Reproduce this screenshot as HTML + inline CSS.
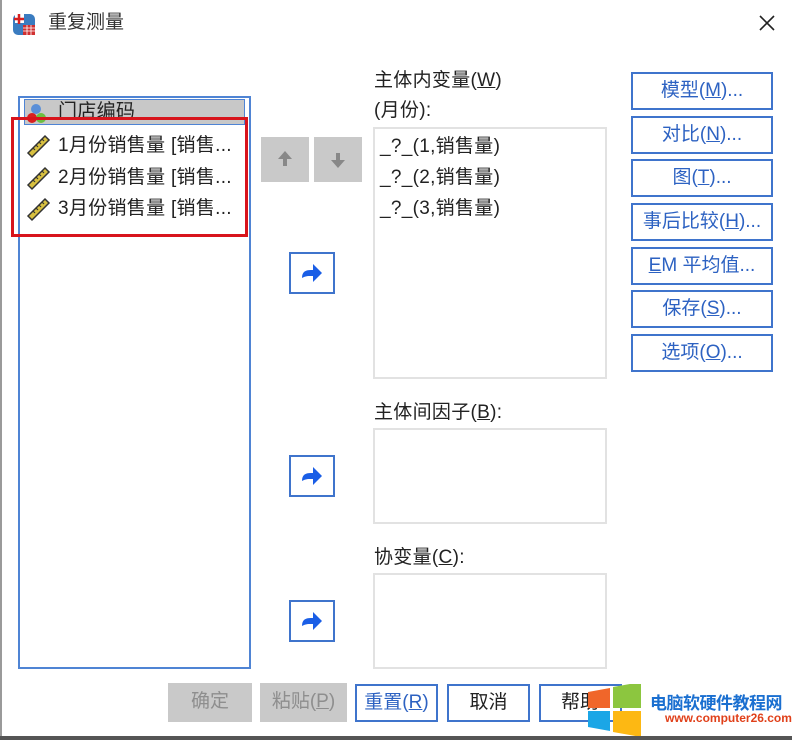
<!DOCTYPE html>
<html><head><meta charset="utf-8"><style>
*{margin:0;padding:0;box-sizing:border-box}
body{width:792px;height:740px;background:#fff;position:relative;overflow:hidden;font-family:"Liberation Sans","Noto Sans CJK SC",sans-serif;color:#222}
.a{position:absolute}
.t{font-size:19px;white-space:nowrap;line-height:22px;letter-spacing:0.3px}
.box{border:2px solid #e2e2e2;background:#fff}
.rb{border:2px solid #3f74cc;background:#fff;color:#2d62c2;font-size:19px;text-align:center;line-height:33px;white-space:nowrap}
.gb{background:#c9c9c9;color:#8e8e8e;font-size:19px;text-align:center;line-height:38px}
.ab{border:2px solid #3f74cc;background:#fff;width:46px;height:42px}
u{text-decoration:underline}
</style></head><body>
<div class="a" style="left:0;top:0;width:2px;height:740px;background:#9a9a9a"></div>
<div class="a" style="left:0;top:736px;width:792px;height:4px;background:#555"></div>
<svg class="a" style="left:12px;top:11px" width="26" height="26" viewBox="0 0 26 26"><rect x="1" y="3" width="22" height="21" rx="5" fill="#3a7cc0"/><rect x="3" y="3" width="9" height="9" fill="#fff"/><path d="M2 8h10M7 3v10" stroke="#d62020" stroke-width="2.5"/><rect x="11" y="14" width="12" height="10" fill="#d03030"/><path d="M11 17h12M11 20h12M15 14v10M19 14v10" stroke="#fff" stroke-width="0.8"/></svg>
<div class="a t" style="left:48px;top:12px;font-size:19px;color:#333;letter-spacing:0">重复测量</div>
<svg class="a" style="left:758px;top:14px" width="18" height="18"><path d="M2 2L16 16M16 2L2 16" stroke="#222" stroke-width="1.6"/></svg>
<div class="a" style="left:18px;top:96px;width:233px;height:573px;border:2px solid #4f84d4"></div>
<div class="a" style="left:24px;top:99px;width:221px;height:26px;background:#c8c8c8;border:1px solid #4f84d4"></div>
<svg class="a" style="left:26px;top:101px" width="24" height="24"><circle cx="10" cy="8" r="5" fill="#5a8fd8"/><circle cx="6" cy="17" r="5" fill="#d82020"/><circle cx="15" cy="17" r="5" fill="#6cbf40"/></svg>
<div class="a t" style="left:58px;top:101px">门店编码</div>
<svg width="0" height="0"><defs><g id="r"><path d="M3 20L20 3l4 4L7 24z" fill="#d8c040" stroke="#333" stroke-width="1.5"/><path d="M8 15l2 2M11 12l2 2M14 9l2 2M17 6l2 2" stroke="#333" stroke-width="1.2"/></g></defs></svg>
<svg class="a" style="left:25px;top:133px" width="26" height="26"><use href="#r"/></svg>
<svg class="a" style="left:25px;top:165px" width="26" height="26"><use href="#r"/></svg>
<svg class="a" style="left:25px;top:196px" width="26" height="26"><use href="#r"/></svg>
<div class="a t" style="left:58px;top:135px">1月份销售量 [销售...</div>
<div class="a t" style="left:58px;top:167px">2月份销售量 [销售...</div>
<div class="a t" style="left:58px;top:198px">3月份销售量 [销售...</div>
<div class="a" style="left:11px;top:117px;width:237px;height:120px;border:3px solid #d8141c"></div>
<div class="a gb" style="left:261px;top:137px;width:48px;height:45px"></div>
<div class="a gb" style="left:314px;top:137px;width:48px;height:45px"></div>
<svg class="a" style="left:261px;top:137px" width="100" height="45"><path d="M24 14l-7 8h5v7h4v-7h5z" fill="#888"/><path d="M77 31l-7-8h5v-7h4v7h5z" fill="#888"/></svg>
<svg width="0" height="0"><defs><g id="ar"><path d="M8 18c0-6 3-8 9-8h2V4l9 9-9 9v-6h-3c-4 0-6 1-8 2z" fill="#1a5ee6"/></g></defs></svg>
<div class="a ab" style="left:289px;top:252px"><svg width="42" height="38"><use href="#ar" transform="translate(3,6)"/></svg></div>
<div class="a ab" style="left:289px;top:455px"><svg width="42" height="38"><use href="#ar" transform="translate(3,6)"/></svg></div>
<div class="a ab" style="left:289px;top:600px"><svg width="42" height="38"><use href="#ar" transform="translate(3,6)"/></svg></div>
<div class="a t" style="left:374px;top:70px">主体内变量(<u>W</u>)</div>
<div class="a t" style="left:374px;top:100px">(月份):</div>
<div class="a box" style="left:373px;top:127px;width:234px;height:252px"></div>
<div class="a t" style="left:380px;top:136px">_?_(1,销售量)</div>
<div class="a t" style="left:380px;top:167px">_?_(2,销售量)</div>
<div class="a t" style="left:380px;top:198px">_?_(3,销售量)</div>
<div class="a t" style="left:374px;top:402px">主体间因子(<u>B</u>):</div>
<div class="a box" style="left:373px;top:428px;width:234px;height:96px"></div>
<div class="a t" style="left:374px;top:547px">协变量(<u>C</u>):</div>
<div class="a box" style="left:373px;top:573px;width:234px;height:96px"></div>
<div class="a rb" style="left:631px;top:72px;width:142px;height:38px">模型(<u>M</u>)...</div>
<div class="a rb" style="left:631px;top:116px;width:142px;height:38px">对比(<u>N</u>)...</div>
<div class="a rb" style="left:631px;top:159px;width:142px;height:38px">图(<u>T</u>)...</div>
<div class="a rb" style="left:631px;top:203px;width:142px;height:38px">事后比较(<u>H</u>)...</div>
<div class="a rb" style="left:631px;top:247px;width:142px;height:38px"><u>E</u>M 平均值...</div>
<div class="a rb" style="left:631px;top:290px;width:142px;height:38px">保存(<u>S</u>)...</div>
<div class="a rb" style="left:631px;top:334px;width:142px;height:38px">选项(<u>O</u>)...</div>
<div class="a gb" style="left:168px;top:683px;width:84px;height:39px">确定</div>
<div class="a gb" style="left:260px;top:683px;width:87px;height:39px">粘贴(<u>P</u>)</div>
<div class="a rb" style="left:355px;top:684px;width:83px;height:38px">重置(<u>R</u>)</div>
<div class="a rb" style="left:447px;top:684px;width:83px;height:38px;color:#222">取消</div>
<div class="a rb" style="left:539px;top:684px;width:83px;height:38px;color:#222;text-align:left;padding-left:20px">帮助</div>
<svg class="a" style="left:586px;top:684px" width="56" height="52"><path d="M2 8l22-4v20H2z" fill="#f0662a"/><path d="M27 3l28-5v26H27z" fill="#8cc63f"/><path d="M2 27h22v20L2 43z" fill="#1ba6e6"/><path d="M27 27h28v26l-28-5z" fill="#fdb813"/></svg>
<div class="a" style="left:650px;top:689px;font-size:17px;font-weight:bold;color:#1a6fd0;white-space:nowrap;letter-spacing:-0.5px">电脑软硬件教程网</div>
<div class="a" style="left:665px;top:711px;font-size:12px;font-weight:bold;color:#e0401a;white-space:nowrap">www.computer26.com</div>
</body></html>
